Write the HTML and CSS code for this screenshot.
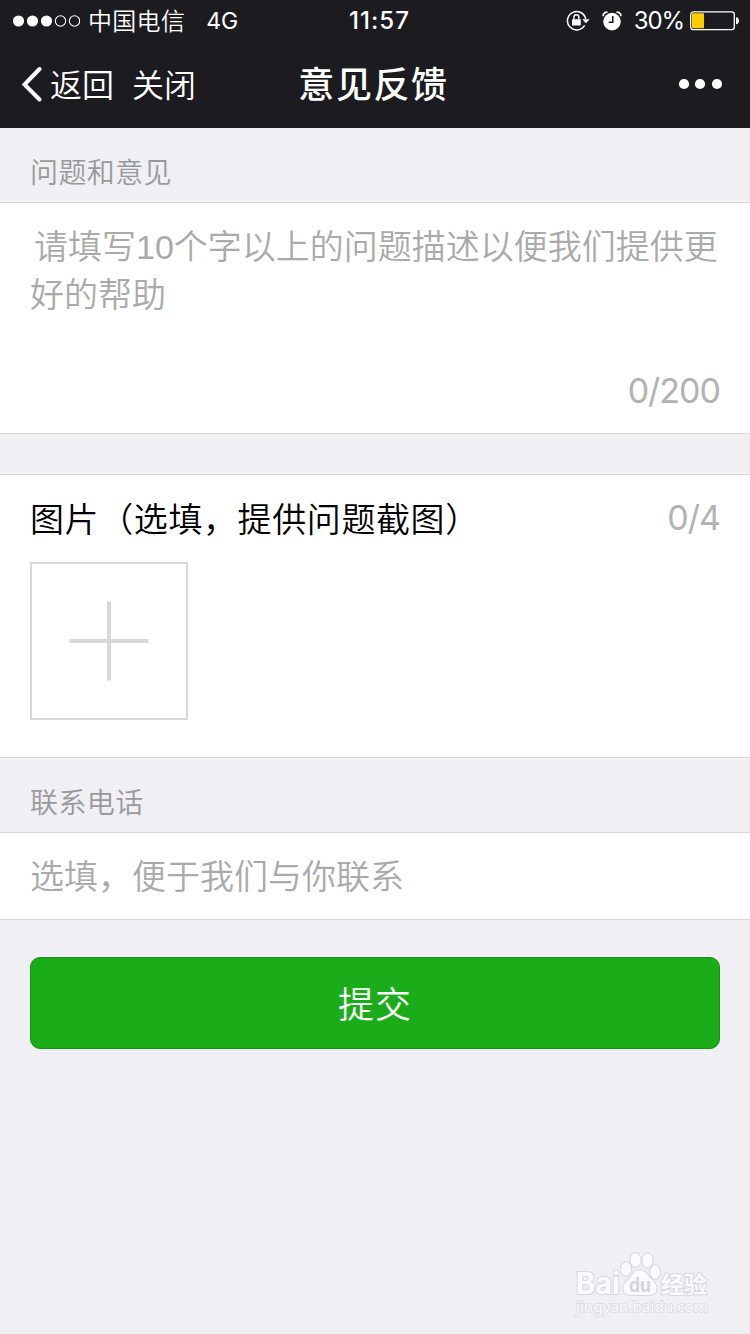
FILE: index.html
```html
<!DOCTYPE html>
<html lang="zh-CN">
<head>
<meta charset="utf-8">
<title>意见反馈</title>
<link rel="stylesheet" href="styles.css">
</head>
<body>
<header class="top">
  <div class="status">
    <div class="status-left">
      <svg class="signal" width="68" height="12" viewBox="0 0 68 12">
        <g fill="#fff"><circle cx="6.500" cy="6" r="5.600"/><circle cx="20.500" cy="6" r="5.600"/><circle cx="34.500" cy="6" r="5.600"/></g>
        <g fill="none" stroke="#fff" stroke-width="1.100"><circle cx="48.500" cy="6" r="5.200"/><circle cx="62.500" cy="6" r="5.200"/></g>
      </svg>
      <span class="carrier">中国电信</span>
      <span class="network">4G</span>
    </div>
    <span class="clock">11:57</span>
    <div class="status-right">
      <svg width="24" height="22" viewBox="0 0 24 22">
        <path d="M18.600 15.400A9.200 9.200 0 1 1 19.700 9" fill="none" stroke="#fff" stroke-width="1.500"/>
        <path d="M16.300 9.200h7.400l-3.700 4z" fill="#fff"/>
        <rect x="6" y="9.200" width="8.800" height="6.400" rx=".6" fill="#fff"/>
        <path d="M7.900 9.500V7.200a2.500 2.500 0 0 1 5 0v2.300" fill="none" stroke="#fff" stroke-width="1.400"/>
      </svg>
      <svg class="alarm" width="20" height="20" viewBox="0 0 20 20">
        <circle cx="10" cy="10.600" r="8.800" fill="#fff"/>
        <path d="M10.800 5v6.200H6.700" fill="none" stroke="#1c1b20" stroke-width="1.500"/>
        <path d="M1 5.200C1.200 2.800 3 1.300 5.500 1.200M19 5.200C18.800 2.800 17 1.300 14.500 1.200" fill="none" stroke="#fff" stroke-width="1.700"/>
      </svg>
      <span class="percent">30%</span>
      <svg class="battery" width="50" height="20" viewBox="0 0 50 20">
        <rect x=".7" y=".9" width="43.600" height="17.800" rx="2.600" fill="none" stroke="#fff" stroke-width="1.300"/>
        <rect x="2" y="2.300" width="12" height="15" rx=".8" fill="#fc0"/>
        <path d="M46 6.300c1.800.2 3 1.600 3 3.500s-1.200 3.300-3 3.500z" fill="#fff"/>
      </svg>
    </div>
  </div>
  <nav class="nav">
    <div class="nav-left">
      <svg width="22" height="36" viewBox="0 0 22 36"><path d="M19.500 3 4.500 18.500 19.500 33.500" fill="none" stroke="#fff" stroke-width="4" stroke-linecap="round" stroke-linejoin="miter"/></svg>
      <span class="back">返回</span>
      <span class="close">关闭</span>
    </div>
    <h1 class="title">意见反馈</h1>
    <svg class="more" width="44" height="12" viewBox="0 0 44 12" fill="#fff"><circle cx="6" cy="6" r="5.100"/><circle cx="22" cy="6" r="5.100"/><circle cx="39" cy="6" r="5.100"/></svg>
  </nav>
</header>
<main>
  <h2 class="label">问题和意见</h2>
  <section class="panel opinion">
    <p class="placeholder first">请填写10个字以上的问题描述以便我们提供更好的帮助</p>
    <span class="count">0/200</span>
  </section>
  <section class="panel photos">
    <div class="photos-head">
      <span class="photos-title">图片（选填，提供问题截图）</span>
      <span class="count">0/4</span>
    </div>
    <div class="add">
      <svg width="80" height="80" viewBox="0 0 80 80"><path d="M40 .5v79M.5 40h79" stroke="#d9d9d9" stroke-width="4"/></svg>
    </div>
  </section>
  <h2 class="label">联系电话</h2>
  <section class="panel phone"><p class="placeholder">选填，便于我们与你联系</p></section>
  <div class="submit">提交</div>
</main>
<footer class="watermark">
  <svg width="144" height="68" viewBox="0 0 144 68">
    <g class="mark">
      <text class="brand" x="6" y="42" textLength="44" lengthAdjust="spacingAndGlyphs">Bai</text>
      <ellipse cx="56" cy="17" rx="5" ry="6.800"/>
      <ellipse cx="65.500" cy="8" rx="5" ry="7"/>
      <ellipse cx="77.500" cy="8.500" rx="5" ry="7"/>
      <ellipse cx="85" cy="20" rx="5" ry="6.800"/>
      <path d="M70 18c6 0 7 5 11 9 4 3.500 7 7 5 12-2 5-8 4-16 4s-14 1-16-4c-2-5 1-8.500 5-12 4-4 5-9 11-9z"/>
      <text class="jingyan" x="91" y="41" textLength="46" lengthAdjust="spacingAndGlyphs">经验</text>
      <text class="site" x="6" y="60" textLength="132" lengthAdjust="spacingAndGlyphs">jingyan.baidu.com</text>
    </g>
    <text class="du" x="59" y="40" textLength="22" lengthAdjust="spacingAndGlyphs">du</text>
  </svg>
</footer>
</body>
</html>
```
FILE: styles.css
```css
* { box-sizing: border-box; }
body {
  margin: 0;
  width: 750px;
  height: 1334px;
  overflow: hidden;
  display: flex;
  flex-direction: column;
  background: #efeff4;
  font-family: "Inter", "Noto Sans CJK SC", sans-serif;
}
h1, h2, p { margin: 0; font-weight: 400; }
svg { display: block; flex: none; }
span { white-space: nowrap; }

.top { height: 128px; background: #1c1b20; color: #fff; }
.status, .nav {
  display: grid;
  grid-template-columns: 1fr auto 1fr;
  align-items: center;
}
.status { height: 40px; padding: 1px 11px 0 12px; font-size: 24px; line-height: 40px; }
.status-left, .status-right, .nav-left { display: flex; align-items: center; }
.status-right { justify-content: flex-end; }
.carrier {
  margin: -3px 0 0 8px;
  font-family: "Noto Sans CJK SC DemiLight", "Noto Sans CJK SC", sans-serif;
  font-size: 24px;
  font-weight: 350;
  letter-spacing: .3px;
  line-height: 38px;
}
.network { margin-left: 21px; font-size: 23px; }
.clock { font-size: 24px; font-weight: 500; letter-spacing: 1.1px; padding-left: 8px; }
.status-right { margin-right: -1px; }
.alarm { margin-left: 12px; }
.percent { margin-left: 12px; font-size: 24px; letter-spacing: -1.1px; }
.battery { margin-left: 6px; }

.nav { height: 88px; padding: 0 28px 0 20px; font-size: 32px; }
.nav-left { font-family: "Noto Sans CJK SC DemiLight", "Noto Sans CJK SC", sans-serif; font-weight: 350; line-height: 46px; }
.back, .close { margin-top: -2px; }
.back { margin-left: 8px; }
.close { margin-left: 18px; }
.title { font-size: 36px; font-weight: 500; letter-spacing: 1.6px; padding-left: 5px; margin-top: -4px; }
.more { justify-self: end; }

.label {
  height: 74px;
  padding: 21px 30px 0;
  color: #999;
  font-family: "Noto Sans CJK SC DemiLight", "Noto Sans CJK SC", sans-serif;
  font-size: 28px;
  line-height: 44px;
  font-weight: 350;
  letter-spacing: .4px;
}
.panel { background: #fff; border: solid #d9d9d9; border-width: 1px 0; padding: 0 30px; }
.placeholder {
  color: #aaa;
  font-family: "Liberation Sans", "Noto Sans CJK SC DemiLight", "Noto Sans CJK SC", sans-serif;
  font-size: 34px;
  line-height: 48px;
  font-weight: 350;
}
.opinion {
  height: 232px;
  padding-top: 20px;
  display: flex;
  flex-direction: column;
  justify-content: space-between;
}
.first { text-indent: 4px; width: 690px; }
.count { color: #b2b2b2; font-size: 34px; line-height: 48px; font-weight: 400; letter-spacing: -1px; }
.opinion .count { align-self: flex-end; margin-bottom: 18px; }
.photos { height: 284px; margin-top: 40px; padding-top: 19px; }
.photos-head { display: flex; justify-content: space-between; line-height: 48px; }
.photos-title {
  font-family: "Noto Sans CJK SC DemiLight", "Noto Sans CJK SC", sans-serif;
  font-size: 34px;
  font-weight: 350;
  letter-spacing: .6px;
  color: #000;
}
.add {
  display: flex;
  align-items: center;
  justify-content: center;
  width: 158px;
  height: 158px;
  margin-top: 20px;
  border: 2px solid #d9d9d9;
}
.phone { height: 88px; padding-top: 20px; }
.submit {
  height: 92px;
  margin: 37px 30px 0;
  border: 1px solid #18911a;
  border-radius: 10px;
  background: #1aad19;
  color: #fff;
  font-family: "Noto Sans CJK SC DemiLight", "Noto Sans CJK SC", sans-serif;
  font-size: 36px;
  font-weight: 350;
  line-height: 88px;
  text-align: center;
  letter-spacing: 1px;
}
.watermark { margin: auto 36px 14px auto; }
.mark { fill: #fbfbfd; stroke: #d8d8dd; stroke-width: 2px; paint-order: stroke; }
.brand { font: 700 30px "Inter", sans-serif; }
.jingyan { font: 700 23px "Noto Sans CJK SC", sans-serif; }
.site { font: 400 15px "Noto Sans", sans-serif; stroke-width: 1.5px; }
.du { font: 700 20px "Inter", sans-serif; fill: #d3d3d9; }
```
